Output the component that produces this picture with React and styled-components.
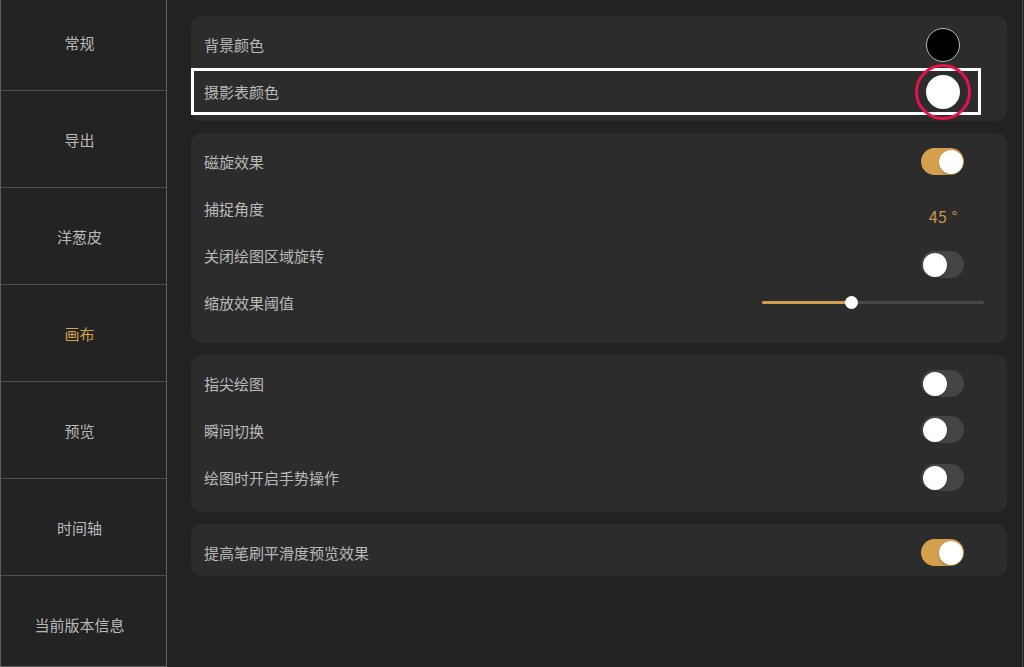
import React from "react";
import styled, { createGlobalStyle } from "styled-components";

const Global = createGlobalStyle`
  html, body { margin: 0; padding: 0; background: #222222; }
  body { font-family: "Noto Sans CJK SC", "Noto Sans", sans-serif; }
  * { box-sizing: border-box; }
`;

const Page = styled.div`
  display: flex;
  width: 1024px;
  height: 667px;
  overflow: hidden;
  background: #222222;
`;

const Sidebar = styled.nav`
  width: 167px;
  height: 667px;
  flex: none;
  display: flex;
  flex-direction: column;
  background: #232323;
  border-left: 1px solid #5e5e5e;
  border-right: 1px solid #5e5e5e;
  border-bottom: 1px solid #5e5e5e;
  overflow: hidden;
`;

const SideList = styled.div`
  display: flex;
  flex-direction: column;
  margin-top: -6px;
`;

const SideItem = styled.div`
  height: 97px;
  flex: none;
  display: flex;
  align-items: center;
  justify-content: center;
  padding-right: 8px;
  border-bottom: 1px solid ${(p) => (p.$last ? "transparent" : "#4e4e4e")};
  font-size: 15px;
  color: ${(p) => (p.$active ? "#d3a04c" : "#b9b9b9")};
`;

const Main = styled.main`
  flex: 1;
  margin-right: 1px;
  border-right: 1px solid #4a4a4a;
  padding: 16px 15px 0 24px;
  display: flex;
  flex-direction: column;
  gap: 12px;
`;

const Card = styled.section`
  background: #2c2c2c;
  border-radius: 10px;
  padding: 5px 0 ${(p) => p.$pb || 0}px;
  display: flex;
  flex-direction: column;
`;

const Row = styled.div`
  position: relative;
  height: 47px;
  display: flex;
  align-items: center;
  justify-content: space-between;
  padding-left: 13px;
`;

const Label = styled.span`
  font-size: 15px;
  color: #bababa;
`;

const Control = styled.div`
  display: flex;
  align-items: center;
  margin-right: ${(p) => p.$mr}px;
  margin-top: ${(p) => (p.$shift || 0) * 2}px;
`;

const Swatch = styled.div`
  width: ${(p) => p.$size}px;
  height: ${(p) => p.$size}px;
  border-radius: 50%;
  background: ${(p) => p.$color};
  border: ${(p) => (p.$ring ? "1.5px solid #b8b8b8" : "none")};
`;

const Track = styled.div`
  width: 43px;
  height: 27px;
  border-radius: 14px;
  background: ${(p) => (p.$on ? "#d4a04e" : "#454547")};
  display: flex;
  align-items: center;
  justify-content: ${(p) => (p.$on ? "flex-end" : "flex-start")};
  padding: 0 1.5px;
`;

const Knob = styled.div`
  width: 24px;
  height: 24px;
  border-radius: 50%;
  background: #ffffff;
  box-shadow: 0 1px 2px rgba(0, 0, 0, 0.3);
`;

const Value = styled.span`
  font-size: 16px;
  color: #c9984c;
  letter-spacing: 0.5px;
`;

const SliderTrack = styled.div`
  position: relative;
  width: 222px;
  height: 3px;
  border-radius: 2px;
  background: #47474a;
  display: flex;
  align-items: center;
`;

const SliderFill = styled.div`
  height: 3px;
  border-radius: 2px;
  background: #d09d4c;
`;

const Thumb = styled.div`
  width: 13px;
  height: 13px;
  border-radius: 50%;
  background: #ffffff;
  margin-left: -6px;
  flex: none;
`;

const Highlight = styled.div`
  position: absolute;
  left: 0;
  top: 0;
  bottom: 0;
  right: 26px;
  border: 3px solid #ffffff;
  pointer-events: none;
`;

const RedRing = styled.div`
  position: absolute;
  width: 56px;
  height: 56px;
  right: 36px;
  top: 50%;
  margin-top: -28px;
  border-radius: 50%;
  border: 3px solid #e5124c;
  pointer-events: none;
`;

const Toggle = ({ on }) => (
  <Track $on={on}>
    <Knob />
  </Track>
);

const Slider = ({ pct }) => (
  <SliderTrack>
    <SliderFill style={{ width: `${pct}%` }} />
    <Thumb />
  </SliderTrack>
);

const sideItems = ["常规", "导出", "洋葱皮", "画布", "预览", "时间轴", "当前版本信息"];

export default function App() {
  return (
    <>
      <Global />
      <Page>
        <Sidebar>
          <SideList>
            {sideItems.map((t, i) => (
              <SideItem key={t} $active={t === "画布"} $last={i === sideItems.length - 1}>
                {t}
              </SideItem>
            ))}
          </SideList>
        </Sidebar>
        <Main>
          <Card $pb={6}>
            <Row>
              <Label>背景颜色</Label>
              <Control $mr={47}>
                <Swatch $size={34} $color="#000000" $ring />
              </Control>
            </Row>
            <Row>
              <Label>摄影表颜色</Label>
              <Control $mr={47}>
                <Swatch $size={34} $color="#ffffff" />
              </Control>
              <Highlight />
              <RedRing />
            </Row>
          </Card>
          <Card $pb={17}>
            <Row>
              <Label>磁旋效果</Label>
              <Control $mr={43}>
                <Toggle on />
              </Control>
            </Row>
            <Row>
              <Label>捕捉角度</Label>
              <Control $mr={49} $shift={7}>
                <Value>45 °</Value>
              </Control>
            </Row>
            <Row>
              <Label>关闭绘图区域旋转</Label>
              <Control $mr={43} $shift={9}>
                <Toggle />
              </Control>
            </Row>
            <Row>
              <Label>缩放效果阈值</Label>
              <Control $mr={23}>
                <Slider pct={40} />
              </Control>
            </Row>
          </Card>
          <Card $pb={11}>
            <Row>
              <Label>指尖绘图</Label>
              <Control $mr={43}>
                <Toggle />
              </Control>
            </Row>
            <Row>
              <Label>瞬间切换</Label>
              <Control $mr={43} $shift={-1}>
                <Toggle />
              </Control>
            </Row>
            <Row>
              <Label>绘图时开启手势操作</Label>
              <Control $mr={43}>
                <Toggle />
              </Control>
            </Row>
          </Card>
          <Card $pb={0}>
            <Row>
              <Label>提高笔刷平滑度预览效果</Label>
              <Control $mr={43}>
                <Toggle on />
              </Control>
            </Row>
          </Card>
        </Main>
      </Page>
    </>
  );
}
